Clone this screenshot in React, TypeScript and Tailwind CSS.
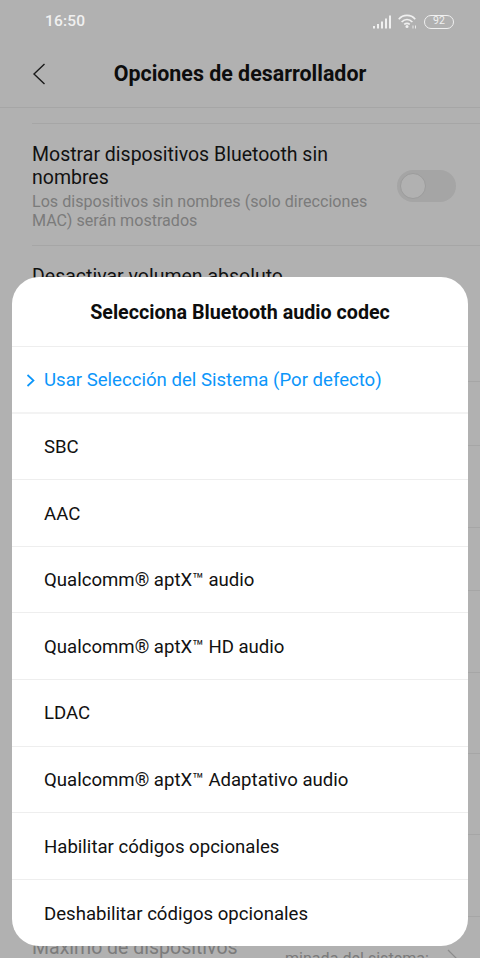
const items = [
  "SBC",
  "AAC",
  "Qualcomm® aptX™ audio",
  "Qualcomm® aptX™ HD audio",
  "LDAC",
  "Qualcomm® aptX™ Adaptativo audio",
  "Habilitar códigos opcionales",
  "Deshabilitar códigos opcionales",
];

const bgRowClasses = ["h-[64px]", "h-[82px]", "h-[63px]", "h-[82px]", "h-[81px]", "h-[81px]", "h-[82px]"];

function Signal() {
  return (
    <svg width="18" height="14" viewBox="0 0 18 14" fill="#f0f0f0">
      <rect x="0" y="11" width="2" height="2.5" />
      <rect x="4" y="9" width="2" height="4.5" />
      <rect x="8" y="6.5" width="2" height="7" />
      <rect x="12" y="3.5" width="2" height="10" />
      <rect x="16" y="0.5" width="2" height="13" />
    </svg>
  );
}

function Wifi() {
  return (
    <svg width="19" height="15" viewBox="0 0 19 15" fill="none" stroke="#f0f0f0" strokeWidth="1.7">
      <path d="M0.8 5.2 C5 0.2 13 0.2 17.2 5.2" />
      <path d="M3.6 8 C6.8 4.8 11.2 4.8 14.4 8" />
      <path d="M6.2 10.4 C8 9 10 9 11.8 10.4" />
      <circle cx="9" cy="12.6" r="1.5" fill="#f0f0f0" stroke="none" />
      <path d="M15 11.5 V14.5 M17.5 11.5 V14.5" strokeWidth="0.9" />
    </svg>
  );
}

export default function App() {
  return (
    <div className="relative w-[480px] h-[958px] overflow-hidden bg-[#b1b1b1] font-['Roboto',sans-serif]">
      <div className="flex items-center h-[43px] pl-[45px] pr-[26px]">
        <span className="text-[15.5px] font-medium text-[#f0f0f0] tracking-[0.2px]">16:50</span>
        <div className="ml-auto flex items-center gap-[7px]">
          <Signal />
          <Wifi />
          <div className="w-[30px] h-[14px] rounded-full border-[1.5px] border-[#f0f0f0] flex items-center justify-center text-[10.5px] leading-none text-[#f0f0f0]">92</div>
        </div>
      </div>
      <div className="relative flex items-center justify-center h-[65px] pb-[2px] border-b border-[#a6a6a6]">
        <svg className="absolute left-[32px] top-[19px]" width="14" height="24" viewBox="0 0 14 24" fill="none" stroke="#1a1a1a" strokeWidth="1.4">
          <path d="M12.5 2 L2 12 L12.5 22" />
        </svg>
        <span className="text-[21.4px] font-bold text-[#0d0d0d]">Opciones de desarrollador</span>
      </div>
      <div className="mt-[15px] ml-[32px] h-[122px] border-t border-[#a6a6a6] pt-[19px] pr-[24px] flex">
        <div className="w-[345px]">
          <div className="text-[19.5px] leading-[23px] text-[#111111]">Mostrar dispositivos Bluetooth sin nombres</div>
          <div className="mt-[3px] text-[16.1px] leading-[19px] text-[#7b7b7b]">Los dispositivos sin nombres (solo direcciones MAC) serán mostrados</div>
        </div>
        <div className="ml-auto mt-[27px] w-[59px] h-[32px] rounded-full bg-[#a5a5a5] p-[3px]">
          <div className="w-[26px] h-[26px] rounded-full bg-[#b1b1b1] border border-[#9c9c9c]" />
        </div>
      </div>
      <div className="ml-[32px] h-[136px] border-t border-[#a6a6a6] pt-[19px] text-[19.5px] leading-[23px] text-[#111111]">Desactivar volumen absoluto</div>
      {bgRowClasses.map((h, i) => (
        <div key={i} className={`ml-[32px] border-t border-[#a6a6a6] ${h}`} />
      ))}
      <div className="relative ml-[32px] border-t border-[#a6a6a6] pt-[19px] pr-[24px] flex text-[#7b7b7b]">
        <span className="text-[19.5px] leading-[23px] whitespace-nowrap">Máximo de dispositivos</span>
        <span className="ml-auto mr-[27px] mt-[13px] text-[16.1px] leading-[19px] whitespace-nowrap">minada del sistema:</span>
        <svg className="absolute left-[415px] top-[32px]" width="11" height="11" viewBox="0 0 11 11" fill="none" stroke="#8c8c8c" strokeWidth="1.2">
          <path d="M1 1 L10 10" />
        </svg>
      </div>

      <div className="absolute left-[12px] top-[277px] w-[456px] h-[669px] rounded-[27px] bg-white overflow-hidden">
        <div className="h-[70px] pt-[2px] pb-[0px] flex items-center justify-center text-[19.7px] font-bold text-[#0d0d0d] border-b border-[#eeeeee]">Selecciona Bluetooth audio codec</div>
        <div className="relative h-[66.6px] flex items-center pl-[32px] pt-[3px] text-[18.6px] text-[#0b96fa] border-b-2 border-[#f3f3f3]">
          <svg className="absolute left-[13.5px] top-[26.5px]" width="9" height="13" viewBox="0 0 9 13" fill="none" stroke="#0b96fa" strokeWidth="1.7">
            <path d="M1.5 1 L7.5 6.5 L1.5 12" />
          </svg>
          Usar Selección del Sistema (Por defecto)
        </div>
        {items.map((t, i) => (
          <div key={t} className={`h-[66.6px] flex items-center pl-[32px] pt-[3px] text-[18.6px] text-[#111111] ${i < items.length - 1 ? "border-b border-[#eeeeee]" : ""}`}>
            {t}
          </div>
        ))}
      </div>
    </div>
  );
}
